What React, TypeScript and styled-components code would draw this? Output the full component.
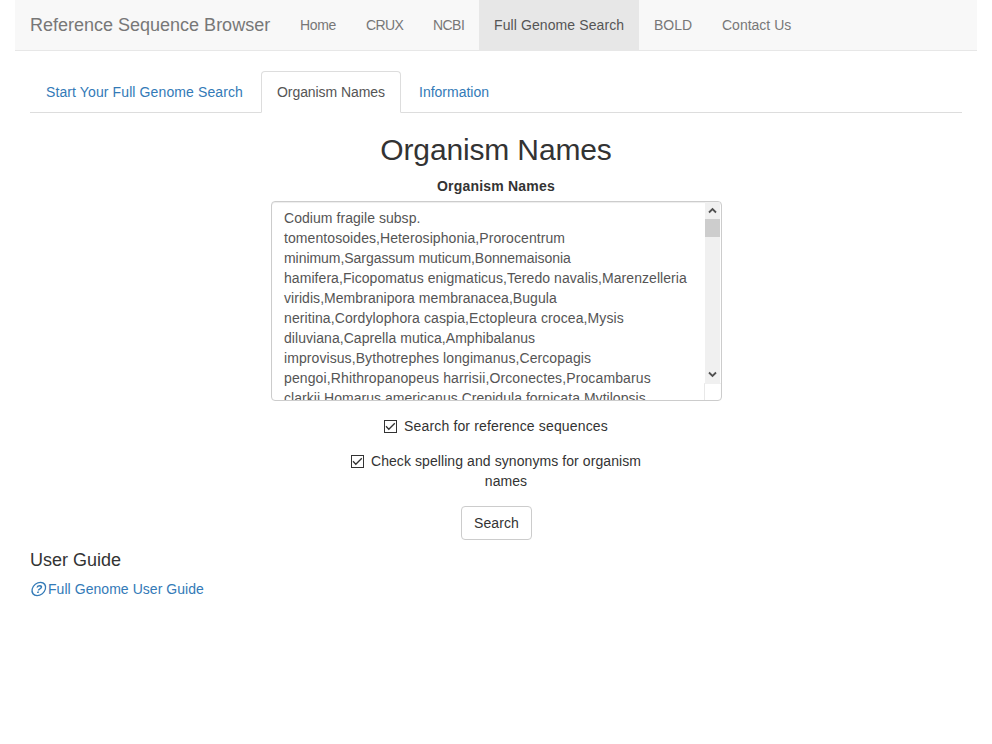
import React from "react";
import styled, { createGlobalStyle } from "styled-components";

const GlobalStyle = createGlobalStyle`
  *, *::before, *::after { box-sizing: border-box; }
  body {
    margin: 0;
    background: #fff;
    color: #333;
    font: 14px/20px "Liberation Sans", Arial, sans-serif;
  }
`;

const Page = styled.div`
  padding: 0 15px;
`;

const Navbar = styled.nav`
  display: flex;
  height: 51px;
  padding: 0 15px;
  background: #f8f8f8;
  border-bottom: 1px solid #e7e7e7;
`;

const Brand = styled.a`
  width: 255px;
  padding: 15px 15px 15px 0;
  font-size: 18px;
  line-height: 20px;
  color: #777;
  white-space: nowrap;
`;

const NavLink = styled.a<{ $active?: boolean; $width: number; $tracking: number }>`
  width: ${(p) => p.$width}px;
  height: 51px;
  padding: 15px 0 15px 15px;
  letter-spacing: ${(p) => p.$tracking}px;
  color: ${(p) => (p.$active ? "#555" : "#777")};
  background: ${(p) => (p.$active ? "#e7e7e7" : "transparent")};
  white-space: nowrap;
`;

const Content = styled.main`
  padding: 20px 15px 0;
`;

const Tabs = styled.div`
  display: flex;
  gap: 2px;
  height: 42px;
  border-bottom: 1px solid #ddd;
`;

const Tab = styled.a<{ $active?: boolean; $width: number; $tracking: number }>`
  width: ${(p) => p.$width}px;
  height: 42px;
  padding: 10px 0 10px 15px;
  letter-spacing: ${(p) => p.$tracking}px;
  border: 1px solid ${(p) => (p.$active ? "#ddd" : "transparent")};
  border-bottom-color: ${(p) => (p.$active ? "#fff" : "transparent")};
  border-radius: 4px 4px 0 0;
  background: ${(p) => (p.$active ? "#fff" : "transparent")};
  color: ${(p) => (p.$active ? "#555" : "#337ab7")};
  white-space: nowrap;
`;

const SearchForm = styled.section`
  display: flex;
  flex-direction: column;
  align-items: center;
`;

const Title = styled.h2`
  margin: 20px 0 10px;
  font-size: 30px;
  line-height: 33px;
  font-weight: 500;
  letter-spacing: -0.15px;
`;

const FieldLabel = styled.label`
  margin-bottom: 5px;
  font-weight: 700;
  letter-spacing: 0.2px;
`;

const TextBox = styled.div`
  display: flex;
  width: 451px;
  height: 200px;
  margin-left: 1px;
  overflow: hidden;
  border: 1px solid #ccc;
  border-radius: 4px;
  box-shadow: inset 0 1px 1px rgba(0, 0, 0, 0.075);
  color: #555;
`;

const Lines = styled.div`
  flex: 1;
  padding: 6px 0 0 12px;
`;

const Line = styled.div<{ $tracking: number }>`
  letter-spacing: ${(p) => p.$tracking}px;
  white-space: pre;
`;

const ScrollGutter = styled.div`
  display: flex;
  flex-direction: column;
  width: 17px;
`;

const Track = styled.div`
  display: flex;
  flex-direction: column;
  height: 181px;
  width: 15px;
  margin-left: 1px;
  background: #f0f0f0;
`;

const ArrowButton = styled.div`
  display: flex;
  align-items: center;
  justify-content: center;
  height: 17px;
`;

const Thumb = styled.div`
  height: 18px;
  margin-bottom: auto;
  background: #cdcdcd;
`;

const ResizeCorner = styled.div`
  flex: 1;
  border-top: 1px solid #f0f0f0;
  border-left: 1px solid #e8e8e8;
`;

const CheckRow = styled.label<{ $tracking: number }>`
  width: 300px;
  margin-top: 15px;
  padding-left: 20px;
  letter-spacing: ${(p) => p.$tracking}px;
  text-align: center;
`;

const CheckBox = styled.svg`
  width: 13px;
  height: 13px;
  margin: 0 7px 0 -20px;
  vertical-align: -2px;
`;

const SearchButton = styled.button`
  width: 71px;
  height: 34px;
  margin: 15px 0 0 1px;
  padding: 6px 0;
  border: 1px solid #ccc;
  border-radius: 4px;
  background: #fff;
  color: #333;
  font: inherit;
  letter-spacing: 0.1px;
`;

const GuideTitle = styled.h4`
  margin: 10px 0 9px;
  font-size: 18px;
  line-height: 20px;
  font-weight: 500;
`;

const GuideLink = styled.a`
  display: flex;
  align-items: center;
  color: #337ab7;
  letter-spacing: 0.05px;
`;

const GuideIcon = styled.svg`
  width: 18px;
  height: 16px;
`;

const navItems = [
  { text: "Home", width: 66, tracking: -0.33 },
  { text: "CRUX", width: 67, tracking: -0.65 },
  { text: "NCBI", width: 61, tracking: -0.55 },
  { text: "Full Genome Search", width: 160, tracking: 0.1, active: true },
  { text: "BOLD", width: 68, tracking: 0 },
  { text: "Contact Us", width: 99, tracking: 0 },
];

const tabItems = [
  { text: "Start Your Full Genome Search", width: 229, tracking: 0.11 },
  { text: "Organism Names", width: 140, tracking: -0.07, active: true },
  { text: "Information", width: 102, tracking: 0 },
];

const organisms: [string, number][] = [
  ["Codium fragile subsp.", 0.05],
  ["tomentosoides,Heterosiphonia,Prorocentrum", 0.08],
  ["minimum,Sargassum muticum,Bonnemaisonia", -0.05],
  ["hamifera,Ficopomatus enigmaticus,Teredo navalis,Marenzelleria", 0.06],
  ["viridis,Membranipora membranacea,Bugula", 0.05],
  ["neritina,Cordylophora caspia,Ectopleura crocea,Mysis", 0.1],
  ["diluviana,Caprella mutica,Amphibalanus", 0.055],
  ["improvisus,Bythotrephes longimanus,Cercopagis", 0.08],
  ["pengoi,Rhithropanopeus harrisii,Orconectes,Procambarus", 0.12],
  ["clarkii,Homarus americanus,Crepidula fornicata,Mytilopsis", 0.04],
];

const Arrow = ({ down = false }: { down?: boolean }) => (
  <svg width="9" height="7" viewBox="0 0 9 7">
    <path
      d={down ? "M1 1.5 4.5 5 8 1.5" : "M1 5.5 4.5 2 8 5.5"}
      fill="none"
      stroke="#505050"
      strokeWidth="1.8"
    />
  </svg>
);

const Checked = () => (
  <CheckBox viewBox="0 0 13 13" fill="none">
    <rect x="0.5" y="0.5" width="12" height="12" fill="#fff" stroke="#333" />
    <path d="M2 6.3 4.8 9.2 10.8 3.2" stroke="#333" strokeWidth="1.3" />
  </CheckBox>
);

export default function App() {
  return (
    <Page>
      <GlobalStyle />
      <Navbar>
        <Brand>Reference Sequence Browser</Brand>
        {navItems.map((item) => (
          <NavLink key={item.text} $active={item.active} $width={item.width} $tracking={item.tracking}>
            {item.text}
          </NavLink>
        ))}
      </Navbar>
      <Content>
        <Tabs>
          {tabItems.map((item) => (
            <Tab key={item.text} $active={item.active} $width={item.width} $tracking={item.tracking}>
              {item.text}
            </Tab>
          ))}
        </Tabs>
        <SearchForm>
          <Title>Organism Names</Title>
          <FieldLabel>Organism Names</FieldLabel>
          <TextBox>
            <Lines>
              {organisms.map(([text, tracking]) => (
                <Line key={text} $tracking={tracking}>{text}</Line>
              ))}
            </Lines>
            <ScrollGutter>
              <Track>
                <ArrowButton><Arrow /></ArrowButton>
                <Thumb />
                <ArrowButton><Arrow down /></ArrowButton>
              </Track>
              <ResizeCorner />
            </ScrollGutter>
          </TextBox>
          <CheckRow $tracking={0.155}><Checked />Search for reference sequences</CheckRow>
          <CheckRow $tracking={0.08}><Checked />Check spelling and synonyms for organism names</CheckRow>
          <SearchButton>Search</SearchButton>
        </SearchForm>
        <GuideTitle>User Guide</GuideTitle>
        <GuideLink>
          <GuideIcon viewBox="0 0 18 16" fill="none" stroke="#337ab7">
            <g transform="translate(8.8 8) skewX(-14)">
              <circle r="6.6" strokeWidth="1.3" />
              <path d="M-2.1 -1.5C-2 -3.8 2.2 -3.8 2.2 -1.4C2.2 0 0 0 0 1.5" strokeWidth="1.5" />
              <path d="M0 2.5V4" strokeWidth="1.6" />
            </g>
          </GuideIcon>
          Full Genome User Guide
        </GuideLink>
      </Content>
    </Page>
  );
}
